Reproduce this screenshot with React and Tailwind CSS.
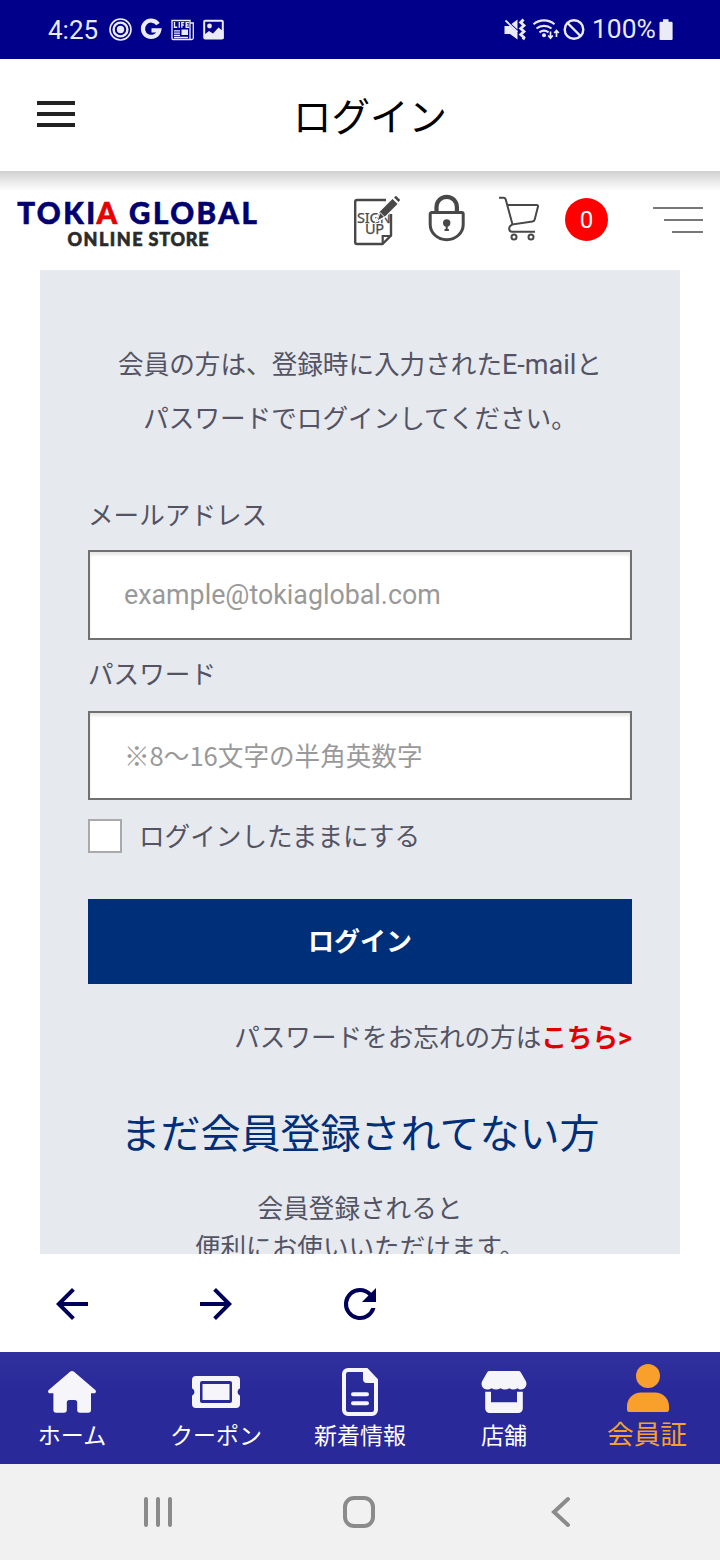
import React from "react";

function StatusBar() {
  return (
    <div className="flex h-[59px] shrink-0 items-center bg-[#00008b] pl-12 pr-[47px] text-[26px] text-[#ebebf8]">
      <span className="w-[60px] leading-none">4:25</span>
      <svg className="h-6 w-[118px]" viewBox="0 0 118 24" fill="none" stroke="#ebebf8">
        <circle cx="12.5" cy="11.5" r="10.5" strokeWidth="1.6" />
        <circle cx="12.5" cy="11.5" r="6.9" strokeWidth="2.4" />
        <circle cx="12.5" cy="11.5" r="3.7" fill="#ebebf8" stroke="none" />
        <path d="M50 6.200A8.200 8.200 0 1 0 51.200 12.300H43.500" strokeWidth="4.200" />
        <path d="M64 2.500h18v19H65a1 1 0 0 1-1-1ZM82 5h3.300v15c0 1-.8 1.500-1.800 1.500h-2" strokeWidth="1.300" />
        <path d="M66 12.800h6M66 15.100h6M66 17.400h6M66 19.500h14" strokeWidth="1.300" />
        <path d="M73.500 11.500h6.500v5.500h-6.500Z" fill="#ebebf8" stroke="none" />
        <path d="M66.500 4v5.200h2.800M71.300 4v5.800M73.800 9.800V4.600h2.400M73.800 7h2M81 4.600h-2.800v4.600H81M78.200 7h2.400" strokeWidth="1.400" />
        <rect x="96.200" y="2.800" width="18.600" height="17.800" rx="1" strokeWidth="2" />
        <circle cx="101.500" cy="8" r="2.400" fill="#ebebf8" stroke="none" />
        <path d="M96 17l5-4 4 2.500 5.500-6 5 4V21H96Z" fill="#ebebf8" stroke="none" />
      </svg>
      <svg className="ml-auto mr-[7px] h-6 w-[84px]" viewBox="0 0 84 24" fill="none" stroke="#ebebf8">
        <path d="M3.500 8h5.500l7.500 6.500v7L9 16H3.500ZM10.500 6 16.500 1.500v10Z" fill="#ebebf8" stroke="none" />
        <path d="M4.500 2.500 16.500 14" strokeWidth="1.800" />
        <path d="M22.500 1.500l-2.800 3 3.300 3-3.300 3 3.300 3-3.300 3 3.300 3-1 2" strokeWidth="2.800" />
        <path d="M32.500 6.300a16 16 0 0 1 21 0M35.500 10.500a12 12 0 0 1 15 0M38.500 14.300a7.500 7.500 0 0 1 9 0" strokeWidth="2.100" />
        <circle cx="43" cy="17.300" r="2" fill="#ebebf8" stroke="none" />
        <path d="M49.500 13.500v6.500M47.200 17.500l2.300 2.700 2.300-2.700M55.500 19v-6.500M53.200 15l2.300-2.500 2.300 2.500" strokeWidth="1.700" />
        <circle cx="73" cy="11.500" r="9.300" strokeWidth="2.400" />
        <path d="M66.500 5l13 13" strokeWidth="2.400" />
      </svg>
      <span className="w-[67px] text-[26.4px] leading-none">100%</span>
      <svg className="h-6 w-[14px]" viewBox="0 0 14 24" fill="#ebebf8">
        <path d="M4 1.200h5.500v2.500H12.300A1.300 1.300 0 0 1 13.600 5V21a1 1 0 0 1-1 1H1.500a1 1 0 0 1-1-1V5a1.300 1.300 0 0 1 1.300-1.300H4Z" />
      </svg>
    </div>
  );
}

function AppBar() {
  return (
    <header className="flex h-[112px] shrink-0 items-center bg-white pl-[37px]">
      <svg className="mb-0.5 h-7 w-[38px]" viewBox="0 0 38 28" stroke="#222" strokeWidth="4">
        <path d="M0 3h38M0 14h38M0 25h38" />
      </svg>
      <h1 className="ml-[218px] mt-[7px] text-[38.5px] leading-none text-black">ログイン</h1>
    </header>
  );
}

function StoreHeader() {
  return (
    <div className="h-[99px] shrink-0 bg-[linear-gradient(to_bottom,#d0d0d0_0,#e9e9e9_10px,#fcfcfc_19px,#fff_20px)]">
      <div className="flex h-full items-start pl-4 pr-[17px] pt-[23px]">
        <svg className="mt-[5px] h-[50px] w-[244px] overflow-visible" viewBox="0 0 244 50" fontFamily="Lato, sans-serif" fontWeight="900" strokeWidth=".6">
          <text x="1.200" y="25" fontSize="29.500" textLength="78" fill="#000070" stroke="#000070">TOKI</text>
          <text x="80.500" y="25" fontSize="29.500" fill="#e60000" stroke="#e60000">A</text>
          <text x="113" y="25" fontSize="29.500" textLength="128" fill="#000070" stroke="#000070">GLOBAL</text>
          <text x="51.500" y="46.500" fontSize="18" textLength="75" fill="#2b2b2b" stroke="#2b2b2b">ONLINE</text>
          <text x="132.500" y="46.500" fontSize="18" textLength="60" fill="#2b2b2b" stroke="#2b2b2b">STORE</text>
        </svg>
        <svg className="ml-[93px] h-[54px] w-[48px]" viewBox="0 0 48 54" fill="none" stroke="#484848">
          <path d="M33 6H4a1.800 1.800 0 0 0-1.800 1.800v40.400A1.800 1.800 0 0 0 4 50h25.500l8.500-8.500V20" strokeWidth="2.400" />
          <path d="M29.700 50v-8h8.500" strokeWidth="2.200" />
          <text fontSize="14.500" fontFamily="Noto Sans, sans-serif" fill="#484848" strokeWidth=".25">
            <tspan x="4" y="29" letterSpacing="-.2">SIGN</tspan>
            <tspan x="12" y="39.500" letterSpacing="-.4">UP</tspan>
          </text>
          <path d="M23.500 27l3-9L40 4.500l5 5L31.500 23Z" fill="#484848" stroke="#fff" strokeWidth="2.400" paintOrder="stroke" />
          <path d="M24 27l3-8.500 4.500 4.500Z" fill="#484848" stroke="#fff" strokeWidth="1" />
          <path d="M41 3.500l2-1.800 4.300 4.300-1.800 2Z" fill="#484848" stroke="none" />
          <path d="M39.500 4l5.500 5.500" stroke="#fff" strokeWidth="1.300" />
        </svg>
        <svg className="ml-[27px] h-[50px] w-[38px]" viewBox="0 0 38 50" fill="none" stroke="#484848">
          <path d="M8.500 18V13a10.200 10.200 0 0 1 20.400 0v5" strokeWidth="4.200" />
          <path d="M3.700 18.500h30a1.500 1.500 0 0 1 1.500 1.500V30.500a16.500 15.200 0 0 1-33 0V20a1.500 1.500 0 0 1 1.500-1.500Z" strokeWidth="3" />
          <circle cx="18.700" cy="29" r="3.700" fill="#484848" stroke="none" />
          <path d="M18.700 30v5.700M16.500 36h4.400" strokeWidth="2" />
        </svg>
        <svg className="ml-[33px] h-[50px] w-[42px]" viewBox="0 0 42 50" fill="none" stroke="#484848" strokeWidth="2">
          <path d="M0 3.800h4.500a2.300 2.300 0 0 1 2.200 1.600L13.500 30.500l20-3a2.500 2.500 0 0 0 2.200-1.900L39 12.500a1.200 1.200 0 0 0-1.200-1.500H8.500M13.500 30.500l-1.500.8c-3 2-2 6.500 1 6.500H36" />
          <circle cx="15" cy="43" r="2.500" />
          <circle cx="32" cy="43" r="2.500" />
        </svg>
        <div className="ml-[24px] mt-[4px] flex size-[43px] items-center justify-center rounded-full bg-[#ff0000] text-2xl text-white">0</div>
        <svg className="ml-auto mt-3 h-7 w-[50px]" viewBox="0 0 50 28" stroke="#777" strokeWidth="2">
          <path d="M0 2h50M11 14h39M19 26h31" />
        </svg>
      </div>
    </div>
  );
}

function LoginPanel() {
  return (
    <main className="mx-10 flex h-[984px] shrink-0 flex-col overflow-hidden bg-[#e6e9ee] px-12 pt-[69px] text-[25.6px] text-[#535364]">
      <p className="shrink-0 text-center leading-[53.7px]">
        会員の方は、登録時に入力された<span className="text-[27px]">E-mail</span>と
        <br />
        パスワードでログインしてください。
      </p>
      <label className="mt-[43px] h-[61px] shrink-0 leading-[54px]">メールアドレス</label>
      <input
        className="h-[90px] shrink-0 border-2 border-[#707070] bg-white px-[34px] text-[26.8px] text-gray-700 shadow-[inset_0_3px_3px_#e8e8e8] placeholder:text-[#999]"
        placeholder="example@tokiaglobal.com"
      />
      <label className="h-[71px] shrink-0 leading-[71px]">パスワード</label>
      <input
        type="password"
        className="h-[89px] shrink-0 border-2 border-[#707070] bg-white px-[34px] pb-0.5 font-['Noto_Sans_CJK_JP',sans-serif] text-[25.6px] text-gray-700 shadow-[inset_0_3px_3px_#e8e8e8] placeholder:text-[#999]"
        placeholder="※8〜16文字の半角英数字"
      />
      <label className="mt-[19px] flex h-[34px] shrink-0 items-center gap-[17px]">
        <input type="checkbox" className="size-[34px] appearance-none border-2 border-[#a9a9a9] bg-white" />
        <span className="pt-px">ログインしたままにする</span>
      </label>
      <button className="mt-[46px] h-[85px] shrink-0 bg-[#002f7a] pt-px text-[26px] font-bold text-white">ログイン</button>
      <p className="mt-[27px] h-[54px] shrink-0 text-right leading-[54px]">
        パスワードをお忘れの方は<a className="font-bold text-[#e00000]">こちら<span className="text-[27px]">&gt;</span></a>
      </p>
      <h2 className="mt-[40px] h-[60px] shrink-0 whitespace-nowrap text-center text-[40px] leading-[60px] text-[#002f7a]">まだ会員登録されてない方</h2>
      <p className="mt-[25px] shrink-0 text-center leading-[38.4px]">
        会員登録されると
        <br />
        便利にお使いいただけます。
      </p>
    </main>
  );
}

function BrowserControls() {
  return (
    <div className="grid h-[98px] shrink-0 grid-cols-5 place-items-center bg-white pt-0.5">
      <svg className="size-12" viewBox="0 0 24 24" fill="#000058"><path d="M20 11H7.830l5.590-5.590L12 4l-8 8 8 8 1.410-1.410L7.830 13H20v-2z" /></svg>
      <svg className="size-12" viewBox="0 0 24 24" fill="#000058"><path d="M12 4l-1.410 1.410L16.170 11H4v2h12.170l-5.580 5.590L12 20l8-8z" /></svg>
      <svg className="size-12" viewBox="0 0 24 24" fill="#000058"><path d="M17.650 6.350A7.958 7.958 0 0 0 12 4a8 8 0 1 0 7.730 10h-2.080A6 6 0 1 1 12 6c1.660 0 3.140.69 4.220 1.780L13 11h7V4l-2.350 2.350z" /></svg>
    </div>
  );
}

function HomeIcon() {
  return (
    <svg className="h-12 w-12" viewBox="0 0 48 48" fill="#f6f6fa">
      <path d="M22.300 3.600a2.700 2.700 0 0 1 3.400 0L47.300 22c1.300 1.300.500 3.300-1.300 3.300h-3V42a2.800 2.800 0 0 1-2.800 2.800H32a2.800 2.800 0 0 1-2.800-2.800V34.500a2.500 2.500 0 0 0-2.500-2.500h-5.400a2.500 2.500 0 0 0-2.500 2.500V42a2.800 2.800 0 0 1-2.800 2.800H8.200A2.800 2.800 0 0 1 5.400 42V25.300H2C.2 25.300-.6 23.300.7 22Z" />
    </svg>
  );
}

function CouponIcon() {
  return (
    <svg className="h-12 w-12" viewBox="0 0 48 48" fill="#f6f6fa">
      <path fillRule="evenodd" d="M4 8h40a4 4 0 0 1 4 4v8.300a4 4 0 0 0 0 7.400V36a4 4 0 0 1-4 4H4a4 4 0 0 1-4-4v-8.300a4 4 0 0 0 0-7.400V12a4 4 0 0 1 4-4Zm6 5a2 2 0 0 0-2 2v18a2 2 0 0 0 2 2h28a2 2 0 0 0 2-2V15a2 2 0 0 0-2-2Zm.5 3h27v16h-27Z" />
    </svg>
  );
}

function NewsIcon() {
  return (
    <svg className="h-12 w-12" viewBox="0 0 48 48" fill="none" stroke="#f6f6fa">
      <path d="M12 2h18.500L40 12v30a4 4 0 0 1-4 4H12a4 4 0 0 1-4-4V6a4 4 0 0 1 4-4Z" strokeWidth="4" />
      <path d="M27 2l4 0 9 9v4h-9a4 4 0 0 1-4-4Z" fill="#f6f6fa" stroke="none" />
      <path d="M17 26.200h14M17 35.200h14" strokeWidth="4" strokeLinecap="round" />
    </svg>
  );
}

function StoreIcon() {
  return (
    <svg className="h-12 w-12" viewBox="0 0 48 48" fill="#f6f6fa">
      <path d="M9.500 3h29a2.800 2.800 0 0 1 2.400 1.400l5 8.800c1.700 4-1 8.200-4.900 8.200-1.500 0-2.500-.3-3.500-1.200q-4.500 2.600-8 0-4.500 2.600-9 0-4.500 2.600-9 0c-1 .9-3 1.200-4.500 1.200-3.900 0-6.600-4.200-4.900-8.200l5-8.800A2.800 2.800 0 0 1 9.500 3Z" />
      <path fillRule="evenodd" d="M5.200 23.800h5.800V34.300h26V23.800h5.800V40.500a4.500 4.500 0 0 1-4.500 4.500H9.700A4.500 4.500 0 0 1 5.200 40.500Z" />
    </svg>
  );
}

function MemberIcon() {
  return (
    <svg className="h-12 w-12" viewBox="0 0 48 48" fill="#f99f2b">
      <circle cx="24" cy="12" r="12" />
      <path d="M17 28.500h14A14 14 0 0 1 45 42.500v3.300A2.200 2.200 0 0 1 42.800 48H5.200A2.200 2.200 0 0 1 3 45.800v-3.300A14 14 0 0 1 17 28.500Z" />
    </svg>
  );
}

const tabs = [
  { label: "ホーム", Icon: HomeIcon },
  { label: "クーポン", Icon: CouponIcon },
  { label: "新着情報", Icon: NewsIcon },
  { label: "店舗", Icon: StoreIcon },
];

function TabBar() {
  return (
    <nav className="grid h-[112px] shrink-0 grid-cols-5 bg-[#292999] bg-linear-to-b from-[#30309e] to-[#292999] to-35% text-white">
      {tabs.map(({ label, Icon }) => (
        <div key={label} className="flex flex-col items-center pt-4">
          <Icon />
          <span className="mt-[9px] text-[23px] leading-6">{label}</span>
        </div>
      ))}
      <div className="flex flex-col items-center pt-3 text-[#f99f2b]">
        <MemberIcon />
        <span className="mr-0.5 mt-[9px] text-[26.7px] leading-7">会員証</span>
      </div>
    </nav>
  );
}

function SystemNav() {
  return (
    <div className="flex h-24 shrink-0 items-center bg-[#f1f1f1] pl-[143px]">
      <svg className="h-8 w-[430px]" viewBox="0 0 430 32" fill="none" stroke="#8b8b8b" strokeWidth="4">
        <path d="M3 3v26M15 3v26M27 3v26" strokeLinecap="round" />
        <rect x="202" y="2" width="28" height="28" rx="9" />
        <path d="M425 3 411 16l14 13" strokeLinecap="round" />
      </svg>
    </div>
  );
}

export default function App() {
  return (
    <div className="flex h-[1560px] w-[720px] flex-col overflow-hidden bg-white font-['Roboto','Noto_Sans_CJK_JP',sans-serif]" lang="ja">
      <StatusBar />
      <AppBar />
      <StoreHeader />
      <LoginPanel />
      <BrowserControls />
      <TabBar />
      <SystemNav />
    </div>
  );
}
